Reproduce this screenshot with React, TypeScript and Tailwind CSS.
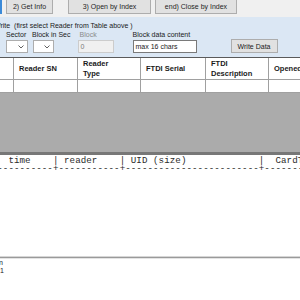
const btn =
  "flex items-center justify-center border border-t-0 border-[#adadad] bg-[#e1e1e1] text-[7px] leading-none text-[#1e1e1e] whitespace-nowrap";

function Chevron() {
  return (
    <svg width="6" height="4" viewBox="0 0 6 4" className="text-[#606060]">
      <path d="M0.5 0.5 L3 3 L5.5 0.5" fill="none" stroke="currentColor" strokeWidth="1" />
    </svg>
  );
}

function Combo({ w }: { w: string }) {
  return (
    <div className={`${w} flex h-[13px] items-center justify-end border border-[#adadad] bg-white pr-[3px]`}>
      <Chevron />
    </div>
  );
}

// log header as printed by the app, scrolled a bit to the right
const line1 =
  "  time" + "    " + "|" + " reader" + "    " + "|" + " UID (size)" + " ".repeat(13) + "|" + "  CardType";
const line2 = "-".repeat(10) + "+" + "-".repeat(11) + "+" + "-".repeat(24) + "+" + "-".repeat(20);

const head = "flex h-full items-center border-r border-[#a0a0a0] pl-[5px] text-[7.5px] font-bold leading-[10px] text-[#1a1a1a]";
const cell = "h-full border-r border-[#a0a0a0]";

export default function App() {
  return (
    <div className="h-[300px] w-[300px] overflow-hidden bg-white font-['Liberation_Sans',Arial,sans-serif] text-[#1a1a1a]">
      {/* top buttons */}
      <div className="flex h-[17px] bg-[#f0f0f0]">
        <div className="h-[14px] w-[2px] bg-[#3b8ad8]" />
        <div className={`${btn} ml-[4px] h-[14px] w-[47px]`}>2) Get Info</div>
        <div className={`${btn} ml-[15px] h-[14px] w-[83px]`}>3) Open by Index</div>
        <div className={`${btn} ml-[4px] h-[14px] w-[82px]`}>end) Close by Index</div>
      </div>

      {/* write panel */}
      <div className="h-[40px] bg-[#dbe7f4] pt-[4px] text-[7px] leading-[9px]">
        <div className="-ml-[6px] whitespace-pre">Write  (first select Reader from Table above )</div>
        <div className="flex">
          <div className="ml-[6px] flex w-[22px] flex-col">
            <span className="whitespace-nowrap">Sector</span>
            <div className="mt-[1px]">
              <Combo w="w-[22px]" />
            </div>
          </div>
          <div className="ml-[4px] flex flex-col">
            <span className="whitespace-nowrap">Block in Sec</span>
            <div className="ml-[1px] mt-[1px]">
              <Combo w="w-[21px]" />
            </div>
          </div>
          <div className="ml-[7px] flex flex-col">
            <span className="ml-[2px] whitespace-nowrap text-[#8a8a8a]">Block</span>
            <div className="mt-[1px] flex h-[13px] w-[36px] items-center border border-[#cccccc] bg-[#f0f0f0] pl-[2px] text-[#7a7a7a]">
              0
            </div>
          </div>
          <div className="ml-[19px] flex flex-col">
            <span className="whitespace-nowrap">Block data content</span>
            <div className="mt-[1px] flex h-[13px] w-[64px] items-center border border-[#7a7a7a] bg-white pl-[2px]">
              max 16 chars
            </div>
          </div>
          <div className="ml-[34px] mt-[9px] flex h-[14px] w-[47px] items-center justify-center border border-[#adadad] bg-[#e1e1e1]">
            Write Data
          </div>
        </div>
      </div>

      {/* grid */}
      <div className="border-t border-[#5a5a5a]">
        <div className="flex h-[22px] border-b border-[#a0a0a0] bg-white">
          <div className={`${cell} w-[14px] shrink-0`} />
          <div className={`${head} w-[64px] shrink-0`}>Reader SN</div>
          <div className={`${head} w-[63px] shrink-0`}>
            Reader
            <br />
            Type
          </div>
          <div className={`${head} w-[65px] shrink-0`}>FTDI Serial</div>
          <div className={`${head} w-[63px] shrink-0`}>
            FTDI
            <br />
            Description
          </div>
          <div className="flex h-full items-center pl-[5px] text-[7.5px] font-bold whitespace-nowrap">Opened</div>
        </div>
        <div className="flex h-[13px] border-b border-[#a0a0a0] bg-white">
          <div className={`${cell} w-[14px] shrink-0`} />
          <div className={`${cell} w-[64px] shrink-0`} />
          <div className={`${cell} w-[63px] shrink-0`} />
          <div className={`${cell} w-[65px] shrink-0`} />
          <div className={`${cell} w-[63px] shrink-0`} />
        </div>
        <div className="h-[59px] bg-[#ababab]" />
      </div>

      {/* splitter */}
      <div className="h-[3px] bg-[#777777]" />

      {/* log */}
      <div className="h-[101px] overflow-hidden bg-white pt-[2px] font-['Liberation_Mono',monospace] text-[9.17px] leading-[8px] tracking-[0.07px] whitespace-pre text-[#2a2a2a]">
        <div className="-ml-[2.75px]">{line1}</div>
        <div className="-ml-[2.75px]">{line2}</div>
      </div>

      <div className="h-[1px] bg-[#d6d6d6]" />
      <div className="h-[1px] bg-[#9a9a9a]" />
      <div className="h-[1px] bg-[#e4e4e4]" />

      <div className="text-[7px] leading-[7.5px] text-[#1a1a1a]">
        <div className="-ml-[1px]">n</div>
        <div>1</div>
      </div>
    </div>
  );
}
